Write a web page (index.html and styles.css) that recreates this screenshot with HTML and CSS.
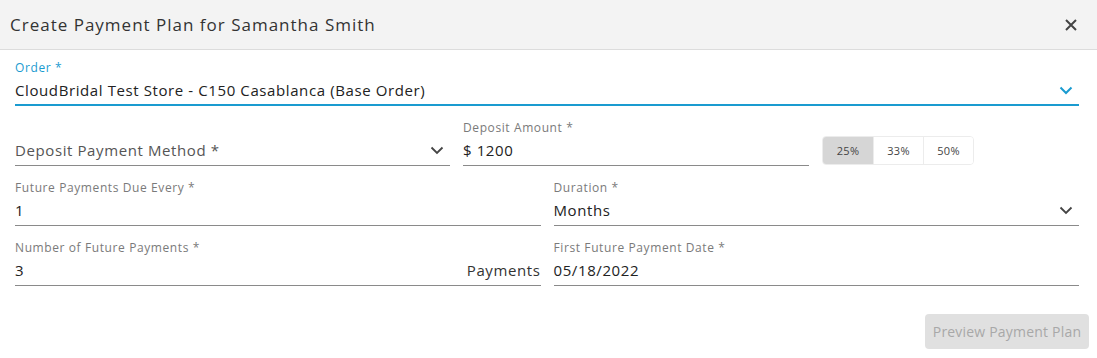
FILE: index.html
```html
<!DOCTYPE html>
<html lang="en">
<head>
    <meta charset="UTF-8">
    <meta name="viewport" content="width=device-width, initial-scale=1.0">
    <title>Create Payment Plan</title>
    <link rel="stylesheet" href="styles.css">
</head>
<body>
    <div class="dialog">
        <div class="dialog-header">
            <h2>Create Payment Plan for Samantha Smith</h2>
            <span class="close">
                <svg width="12" height="12" viewBox="0 0 12 12"><path d="M1 1L11 11M11 1L1 11" stroke="#444" stroke-width="2" fill="none"/></svg>
            </span>
        </div>
        <div class="dialog-body">
            <div class="row">
                <div class="field focused">
                    <label>Order *</label>
                    <div class="input">
                        <span class="value">CloudBridal Test Store - C150 Casablanca (Base Order)</span>
                        <svg class="chevron" width="14" height="9" viewBox="0 0 14 9"><path d="M1.5 1.5L7 7L12.5 1.5" stroke="#1a9bd0" stroke-width="2" fill="none"/></svg>
                    </div>
                </div>
            </div>
            <div class="row row-deposit">
                <div class="field method">
                    <label>&nbsp;</label>
                    <div class="input">
                        <span class="placeholder">Deposit Payment Method *</span>
                        <svg class="chevron" width="14" height="9" viewBox="0 0 14 9"><path d="M1.5 1.5L7 7L12.5 1.5" stroke="#444" stroke-width="1.8" fill="none"/></svg>
                    </div>
                </div>
                <div class="field amount">
                    <label>Deposit Amount *</label>
                    <div class="input">
                        <span class="value">$ 1200</span>
                    </div>
                </div>
                <div class="percent-group">
                    <button class="active">25%</button>
                    <button>33%</button>
                    <button>50%</button>
                </div>
            </div>
            <div class="row halves">
                <div class="field">
                    <label>Future Payments Due Every *</label>
                    <div class="input">
                        <span class="value">1</span>
                    </div>
                </div>
                <div class="field">
                    <label>Duration *</label>
                    <div class="input">
                        <span class="value">Months</span>
                        <svg class="chevron" width="14" height="9" viewBox="0 0 14 9"><path d="M1.5 1.5L7 7L12.5 1.5" stroke="#444" stroke-width="1.8" fill="none"/></svg>
                    </div>
                </div>
            </div>
            <div class="row halves">
                <div class="field">
                    <label>Number of Future Payments *</label>
                    <div class="input">
                        <span class="value">3</span>
                        <span class="suffix">Payments</span>
                    </div>
                </div>
                <div class="field">
                    <label>First Future Payment Date *</label>
                    <div class="input">
                        <span class="value">05/18/2022</span>
                    </div>
                </div>
            </div>
        </div>
        <div class="dialog-footer">
            <button class="preview" disabled>Preview Payment Plan</button>
        </div>
    </div>
</body>
</html>
```

FILE: styles.css
```css
body {
    font-family: "Open Sans", sans-serif;
    margin: 0;
    padding: 0;
    background: #fff;
    color: #333;
    letter-spacing: 0.6px;
}
.dialog {
    width: 1097px;
}
.dialog-header {
    display: flex;
    align-items: center;
    justify-content: space-between;
    height: 50px;
    background-color: #f3f3f3;
    border-bottom: 1px solid #dcdcdc;
    padding: 0 20px 0 10px;
    box-sizing: border-box;
}
.dialog-header h2 {
    margin: 0;
    font-size: 17px;
    font-weight: 400;
    color: #333;
    letter-spacing: 1px;
}
.close {
    display: flex;
    margin-top: 1px;
}
.dialog-body {
    padding: 10px 18px 0 15px;
}
.row {
    display: flex;
    gap: 13px;
    height: 60px;
}
.field {
    flex: 1;
    display: flex;
    flex-direction: column;
}
.field label {
    font-size: 12px;
    line-height: 16px;
    height: 16px;
    color: #7a7a7a;
}
.field .input {
    display: flex;
    align-items: flex-start;
    box-sizing: border-box;
    height: 28px;
    margin-top: 2px;
    padding-top: 1px;
    border-bottom: 1px solid #8a8a8a;
    font-size: 15px;
    line-height: 22px;
}
.field.focused label {
    color: #1a9bd0;
}
.field.focused .input {
    border-bottom: 2px solid #1a9bd0;
}
.value {
    flex: 1;
    color: #222;
}
.placeholder {
    flex: 1;
    color: #555;
}
.suffix {
    color: #333;
}
.chevron {
    margin: 7px 6px 0 0;
}
.method {
    flex: 0 0 435px;
}
.amount {
    flex: 0 0 346px;
}
.percent-group {
    display: flex;
    align-self: flex-start;
    margin-top: 16px;
    border: 1px solid #ececec;
    border-radius: 4px;
    overflow: hidden;
}
.percent-group button {
    width: 50px;
    height: 27px;
    border: none;
    border-left: 1px solid #ececec;
    background: #fff;
    font-family: inherit;
    font-size: 11px;
    letter-spacing: 0.3px;
    color: #444;
    padding: 0;
}
.percent-group button:first-child {
    border-left: none;
}
.percent-group button.active {
    background: #d6d6d6;
}
.dialog-footer {
    display: flex;
    justify-content: flex-end;
    padding: 14px 8px 0 0;
}
.preview {
    background-color: #e0e0e0;
    color: #a8a8a8;
    border: none;
    border-radius: 4px;
    width: 164px;
    height: 35px;
    padding: 0;
    font-family: inherit;
    font-size: 14px;
    letter-spacing: 0.2px;
}
```
